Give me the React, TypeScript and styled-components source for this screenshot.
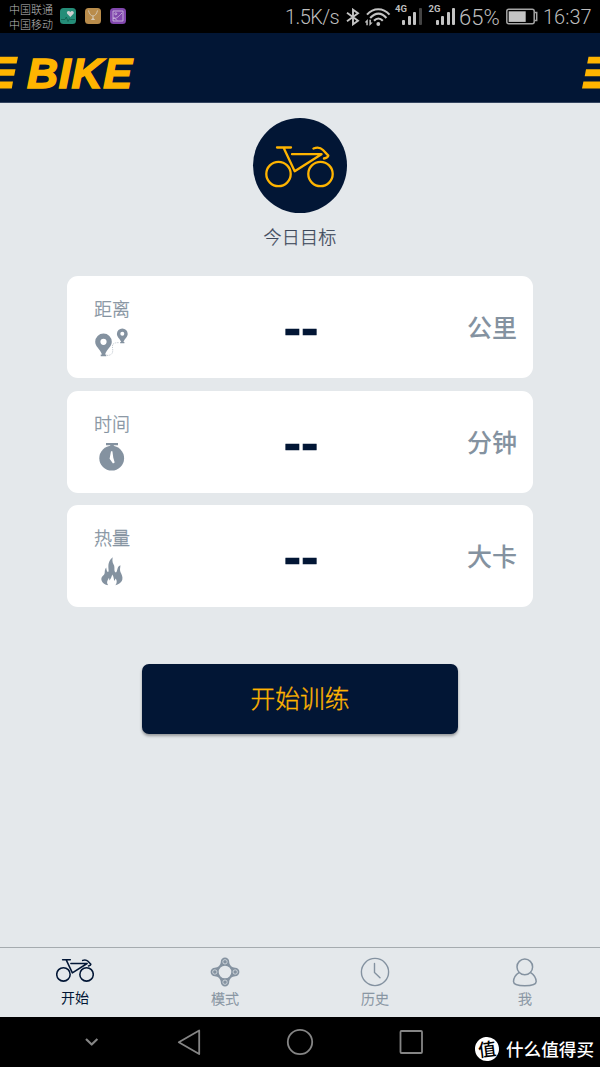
import React from "react";
import styled, { createGlobalStyle } from "styled-components";

const NAVY = "#021635";
const AMBER = "#ffb400";
const GREY = "#8492a0";

const GlobalStyle = createGlobalStyle`
  * { box-sizing: border-box; }
  body { margin: 0; background: #e4e8eb; }
  svg { display: block; flex: none; }
`;

const Screen = styled.div`
  width: 600px;
  height: 1067px;
  display: flex;
  flex-direction: column;
  overflow: hidden;
  background: #e4e8eb;
  font-family: "Noto Sans CJK SC", sans-serif;
  font-weight: 300;
`;

const StatusBar = styled.div`
  height: 33px;
  flex: none;
  background: #000;
  display: flex;
  align-items: center;
  color: #bdbdbd;
`;

const Carriers = styled.div`
  margin-left: 9px;
  width: 51px;
  padding-top: 1px;
  font-size: 11px;
  line-height: 15.5px;
  white-space: nowrap;
`;

const AppIcons = styled.div`
  display: flex;
  gap: 9px;
  margin-top: -1px;
`;

const StatusText = styled.span<{ $ml: number; $w: number; $size?: number; $track?: number }>`
  font-family: Roboto, sans-serif;
  font-weight: 300;
  font-size: ${(p) => p.$size ?? 20}px;
  letter-spacing: ${(p) => p.$track ?? 0}px;
  line-height: 33px;
  padding-top: 1px;
  margin-left: ${(p) => p.$ml}px;
  width: ${(p) => p.$w}px;
  white-space: nowrap;
`;

const Header = styled.header`
  height: 70px;
  flex: none;
  padding-top: 10px;
  background: ${NAVY};
  border-bottom: 1px solid #344560;
  display: flex;
  align-items: center;
`;

const Brand = styled.div`
  flex: 1;
  padding-left: 9px;
  font: italic 700 43px/48px "Liberation Sans", sans-serif;
  letter-spacing: 0.7px;
  -webkit-text-stroke: 1.6px ${AMBER};
  color: ${AMBER};
`;

const Main = styled.main`
  flex: 1;
  display: flex;
  flex-direction: column;
  align-items: center;
  padding-top: 15px;
`;

const Badge = styled.div`
  width: 94px;
  height: 95px;
  padding: 3px 2px 0 0;
  border-radius: 50%;
  background: ${NAVY};
  color: ${AMBER};
  display: flex;
  align-items: center;
  justify-content: center;
`;

const Title = styled.h1`
  margin: 10px 0 0;
  height: 53px;
  font-size: 18px;
  line-height: 27px;
  letter-spacing: 0.3px;
  font-weight: 300;
  -webkit-text-stroke: 0.25px currentColor;
  color: #3c4759;
`;

const Cards = styled.div`
  width: 466px;
  display: flex;
  flex-direction: column;
  gap: 12.5px;
`;

const Card = styled.section`
  height: 102px;
  border-radius: 11px;
  background: #fff;
  display: grid;
  grid-template-columns: 140px 1fr 140px;
`;

const Metric = styled.div`
  padding: 19px 0 0 27px;
  color: ${GREY};
  font-size: 18px;
  line-height: 27px;
  -webkit-text-stroke: 0.3px currentColor;
`;

const MetricIcon = styled.div`
  margin-top: 6px;
  line-height: 0;
`;

const Value = styled.div`
  display: flex;
  justify-content: center;
  padding-left: 2px;
  color: ${NAVY};
  font: 700 50px/104px "Liberation Sans", sans-serif;
  -webkit-text-stroke: 0.6px ${NAVY};
  transform: scaleX(1.04);
`;

const Unit = styled.div`
  padding-right: 16px;
  text-align: right;
  font-size: 25px;
  line-height: 100px;
  font-weight: 500;
  color: ${GREY};
`;

const StartButton = styled.button`
  width: 316px;
  height: 69.5px;
  margin-top: 57px;
  padding: 0 0 2px;
  border: 0;
  border-radius: 7px;
  background: ${NAVY};
  box-shadow: 0 2px 3px rgba(0, 0, 0, 0.35);
  color: ${AMBER};
  font: 300 24.7px/67px "Noto Sans CJK SC", sans-serif;
  -webkit-text-stroke: 0.35px currentColor;
`;

const Tabs = styled.nav`
  height: 70px;
  flex: none;
  border-top: 1px solid #a5abaf;
  display: grid;
  grid-template-columns: repeat(4, 1fr);
`;

const Tab = styled.div<{ $active?: boolean }>`
  display: flex;
  flex-direction: column;
  align-items: center;
  padding-top: 9px;
  color: ${(p) => (p.$active ? NAVY : GREY)};
  font-size: 14px;
  font-weight: ${(p) => (p.$active ? 400 : 300)};
  -webkit-text-stroke: ${(p) => (p.$active ? "0" : "0.3px")} currentColor;
  line-height: 21px;
`;

const TabIcon = styled.div<{ $top?: number; $height?: number }>`
  height: ${(p) => p.$height ?? 31}px;
  padding-top: ${(p) => p.$top ?? 0}px;
`;

const NavBar = styled.div`
  height: 50px;
  flex: none;
  background: #000;
  display: flex;
  align-items: center;
`;

const Watermark = styled.div`
  display: flex;
  align-items: center;
  gap: 7px;
  margin-left: 50px;
  padding-top: 13px;
  color: #fff;
  font-size: 17.6px;
  line-height: 24px;
  font-weight: 500;
  white-space: nowrap;
`;

const Seal = styled.span`
  width: 24px;
  height: 24px;
  border-radius: 50%;
  background: #fff;
  color: #000;
  font-size: 18px;
  line-height: 22px;
  text-align: center;
  transform: rotate(-7deg);
`;

function Bike({ width, stroke }: { width: number; stroke: number }) {
  return (
    <svg width={width} height={(width * 42) / 69} viewBox="0 0 69 42" fill="none" stroke="currentColor" strokeWidth={stroke} strokeLinecap="round" strokeLinejoin="round">
      <circle cx="13.5" cy="28" r="12.2" />
      <circle cx="55.5" cy="28" r="12.2" />
      <path d="M12 1.5H26M18.5 1.5L29.7 25.2L56.5 8.2H27M48.5 2.5C53 .8 56 2 58 4L63.3 9.6C63.3 11.2 61.5 12 59 12.5" />
    </svg>
  );
}

const PinIcon = () => (
  <svg width="38" height="30" viewBox="0 0 38 30" fill={GREY}>
    <path fillRule="evenodd" d="M9.5 5.5A8.3 8.3 0 0 0 1.2 13.8C1.2 18.5 6 21 8 26.5H6.7V28.2H12.3V26.5H11C13 21 17.8 18.5 17.8 13.8A8.3 8.3 0 0 0 9.5 5.5ZM9.5 10.7A3.1 3.1 0 1 1 9.5 16.9A3.1 3.1 0 0 1 9.5 10.7Z" />
    <path fillRule="evenodd" d="M28.3.5A5.4 5.4 0 0 0 22.9 5.9C22.9 9 26 10.5 27.2 14H26.2V15.3H30.4V14H29.4C30.6 10.5 33.7 9 33.7 5.9A5.4 5.4 0 0 0 28.3.5ZM28.3 3.8A2 2 0 1 1 28.3 7.8A2 2 0 0 1 28.3 3.8Z" />
    <path d="M13 27.4C18 27.4 19 25 18.7 21C18 17 18 14.5 25.5 14.6" fill="none" stroke={GREY} strokeWidth=".5" strokeDasharray="1.2 1" />
  </svg>
);

const TimerIcon = () => (
  <svg width="38" height="30" viewBox="0 0 38 30">
    <path d="M12 0H24V2.2H19.8V4H16.2V2.2H12Z" fill={GREY} />
    <circle cx="17.7" cy="15.2" r="12.4" fill={GREY} />
    <path d="M17 8.2H18.4L19.3 14.8L20.7 19.6L19 20.4L15.6 15.8Z" fill="#fff" />
  </svg>
);

const FlameIcon = () => (
  <svg width="38" height="30" viewBox="0 0 38 30">
    <path d="M18.8.2C12.6 5 14.8 11 14.6 14C14.3 16 12.7 15.2 12.2 10.5C9.5 14 12.1 16.5 9.2 18.4C5.4 21.4 7.6 26.8 14.2 28.3C12.4 25.6 13 24.4 15 20.8L15.4 23.5C17.1 21.6 17.7 19.6 18.2 17.6C20 20.2 19.6 22.4 20.4 24L21.7 21.6C23.3 24 22.9 26.4 21.4 28.3C27.8 26.5 30.2 22.5 27.2 16.5C25.3 13 26.3 11.5 26.4 8.3C22.5 9.6 23.8 15 21.9 15.4C19.3 15 21.4 10.4 19.6 7.6C18 4.6 18.3 2.3 18.8.2Z" fill={GREY} />
  </svg>
);

const ChainIcon = () => (
  <svg width="30" height="30" viewBox="0 0 30 30">
    <path fillRule="evenodd" fill={GREY} d="M15 .6A4.2 4.2 0 0 1 19.2 4.8C19.2 8 22 10.8 25.2 10.8A4.2 4.2 0 0 1 25.2 19.2C22 19.2 19.2 22 19.2 25.2A4.2 4.2 0 0 1 10.8 25.2C10.8 22 8 19.2 4.8 19.2A4.2 4.2 0 0 1 4.8 10.8C8 10.8 10.8 8 10.8 4.8A4.2 4.2 0 0 1 15 .6ZM15 8.7A6.3 6.3 0 1 0 15 21.3A6.3 6.3 0 0 0 15 8.7Z" />
    {[[15, 4.8], [25.2, 15], [15, 25.2], [4.8, 15]].map(([x, y]) => (
      <circle key={`${x}-${y}`} cx={x} cy={y} r="2.2" fill={GREY} stroke="#e4e8eb" strokeWidth=".7" />
    ))}
  </svg>
);

const ClockIcon = () => (
  <svg width="30" height="30" viewBox="0 0 30 30" fill="none" stroke={GREY} strokeWidth="1.4" strokeLinecap="round">
    <circle cx="15" cy="15" r="13.6" />
    <path d="M14.5 6.5V15.5L20 20.8" />
  </svg>
);

const PersonIcon = () => (
  <svg width="30" height="30" viewBox="0 0 30 30" fill="none" stroke={GREY} strokeWidth="1.5">
    <circle cx="14.8" cy="9.9" r="7.8" />
    <path d="M9.3 15.3C5.8 17.5 3.6 21 3.5 24.5C3.5 27.7 8 28.7 14.8 28.7S26.2 27.7 26.2 24.5C26 21 23.8 17.5 20.3 15.3" />
  </svg>
);

const LeftStripes = () => (
  <svg width="18" height="34" viewBox="0 0 18 34" fill={AMBER}>
    <path d="M0 .8H18L16.6 7.5H0ZM0 13.2H15.5L14.2 19.8H0ZM0 25.5H13L11.8 32.5H0Z" />
  </svg>
);

const RightStripes = () => (
  <svg width="18" height="34" viewBox="0 0 18 34" fill={AMBER}>
    <path d="M6.5.8H18V7.5H5.2ZM4 13.2H18V20.2H2.7ZM1.4 25.5H18V32.5H0Z" />
  </svg>
);

const BluetoothIcon = () => (
  <svg width="14" height="18" viewBox="0 0 14 18" fill="none" stroke="#c4c4c4" strokeWidth="1.9">
    <path d="M1 4.8L12 12.7L7 16.3V1.7L12 5.3L1 13.2" />
  </svg>
);

const WifiIcon = () => (
  <svg width="26" height="20" viewBox="0 0 26 20" fill="none" stroke="#c4c4c4" strokeWidth="2.1">
    <path d="M2 7.6C8.5.4 18 .4 24.5 7.6M5.2 11C10.5 5.2 16.5 5.2 21.4 11M9 13.8C11.8 10.8 15 10.8 17.8 13.8" />
    <circle cx="13.3" cy="17" r="1.9" fill="#c4c4c4" stroke="none" />
    <path d="M-.5 15.5L2.8 12V18.2H1.3V15.5ZM7.7 15.5L4.4 19V12.8H5.9V15.5Z" fill="#c4c4c4" stroke="none" />
  </svg>
);

const StatusIcons = styled.div`
  display: flex;
  align-items: center;
  gap: 5px;
`;

const Signals = styled.div`
  display: flex;
  gap: 7px;
  margin-left: 4px;
`;

const Signal = styled.div`
  position: relative;
  height: 33px;
  display: flex;
  align-items: flex-end;
  gap: 2.5px;
  padding: 0 0 8px 7px;
`;

const SignalLabel = styled.span`
  position: absolute;
  left: 0;
  top: 4px;
  font: 700 9.5px/10px Roboto, sans-serif;
`;

const SignalBar = styled.i<{ $h: number; $dim?: boolean }>`
  width: 3px;
  height: ${(p) => p.$h}px;
  border-radius: 1px;
  background: ${(p) => (p.$dim ? "#444" : "#c4c4c4")};
`;

const SignalMeter = ({ label, weak }: { label: string; weak?: boolean }) => (
  <Signal>
    <SignalLabel>{label}</SignalLabel>
    <SignalBar $h={5} />
    <SignalBar $h={9} />
    <SignalBar $h={13} />
    <SignalBar $h={17} $dim={weak} />
  </Signal>
);

const BatteryIcon = () => (
  <svg width="32" height="17" viewBox="0 0 32 17" fill="none" stroke="#a4a4a4" strokeWidth="1.5">
    <rect x=".8" y="1.3" width="27.4" height="14.5" rx="2" />
    <rect x="2.7" y="3.3" width="17" height="10.6" fill="#c4c4c4" stroke="none" />
    <path d="M29 4.6H30.7V12.6H29" />
  </svg>
);

const metrics = [
  { name: "距离", unit: "公里", icon: <PinIcon /> },
  { name: "时间", unit: "分钟", icon: <TimerIcon /> },
  { name: "热量", unit: "大卡", icon: <FlameIcon /> },
];

export default function App() {
  return (
    <Screen>
      <GlobalStyle />
      <StatusBar>
        <Carriers>
          <div>中国联通</div>
          <div>中国移动</div>
        </Carriers>
        <AppIcons>
          <svg width="16" height="16" viewBox="0 0 16 16" fill="none">
            <rect width="16" height="16" rx="3.5" fill="#258d78" />
            <path d="M10.3 9L7.2 5.8C5.8 3.5 9 1.7 10.3 4C11.6 1.7 14.9 3.5 13.5 5.8Z" fill="#d0d0d0" />
            <path d="M1 11.5H5L6.3 9L8 13.5L9.4 10.8L10.5 11.5H15" stroke="#12604f" strokeWidth=".8" />
          </svg>
          <svg width="16" height="16" viewBox="0 0 16 16" fill="none" stroke="#d6cbb8">
            <rect width="16" height="16" rx="3.5" fill="#b98c4b" stroke="none" />
            <path d="M3.5 2.5C4.3 6 6 8 8 8S11.7 6 12.5 2.5M8 8V10" strokeWidth=".9" />
            <path d="M5.8 12L8 9.5L10.2 12Z" fill="#d6cbb8" stroke="none" />
          </svg>
          <svg width="16" height="16" viewBox="0 0 16 16" fill="none" stroke="#c9b5dc" strokeWidth=".9">
            <rect width="16" height="16" rx="3.5" fill="#8147ad" stroke="none" />
            <path d="M3 3H13V13H3ZM3 10.5C7 10.5 8 9 12 5M3.5 9L7 12.5" />
            <circle cx="5.8" cy="5.8" r="1" />
          </svg>
        </AppIcons>
        <StatusText $ml={159} $w={61} $track={-0.6}>1.5K/s</StatusText>
        <StatusIcons>
          <BluetoothIcon />
          <WifiIcon />
        </StatusIcons>
        <Signals>
          <SignalMeter label="4G" weak />
          <SignalMeter label="2G" />
        </Signals>
        <StatusText $ml={4} $w={47} $size={22}>65%</StatusText>
        <BatteryIcon />
        <StatusText $ml={5} $w={52}>16:37</StatusText>
      </StatusBar>

      <Header>
        <LeftStripes />
        <Brand>BIKE</Brand>
        <RightStripes />
      </Header>

      <Main>
        <Badge>
          <Bike width={69} stroke={2.3} />
        </Badge>
        <Title>今日目标</Title>
        <Cards>
          {metrics.map((m) => (
            <Card key={m.name}>
              <Metric>
                {m.name}
                <MetricIcon>{m.icon}</MetricIcon>
              </Metric>
              <Value>--</Value>
              <Unit>{m.unit}</Unit>
            </Card>
          ))}
        </Cards>
        <StartButton>开始训练</StartButton>
      </Main>

      <Tabs>
        <Tab $active>
          <TabIcon $top={2} $height={30}>
            <Bike width={38} stroke={2.8} />
          </TabIcon>
          开始
        </Tab>
        <Tab>
          <TabIcon><ChainIcon /></TabIcon>
          模式
        </Tab>
        <Tab>
          <TabIcon><ClockIcon /></TabIcon>
          历史
        </Tab>
        <Tab>
          <TabIcon><PersonIcon /></TabIcon>
          我
        </Tab>
      </Tabs>

      <NavBar>
        <svg width="425" height="50" viewBox="0 0 425 50" fill="none" stroke="#858585" strokeWidth="1.8" strokeLinejoin="round">
          <path d="M86 22L91.7 27.5L97.4 22" strokeWidth="2.2" />
          <path d="M199.2 13.5V37L178.8 25.2Z" />
          <circle cx="300" cy="25" r="12.2" />
          <rect x="400.5" y="14" width="21.5" height="22" rx="1" />
        </svg>
        <Watermark>
          <Seal>值</Seal>
          <span>什么值得买</span>
        </Watermark>
      </NavBar>
    </Screen>
  );
}
